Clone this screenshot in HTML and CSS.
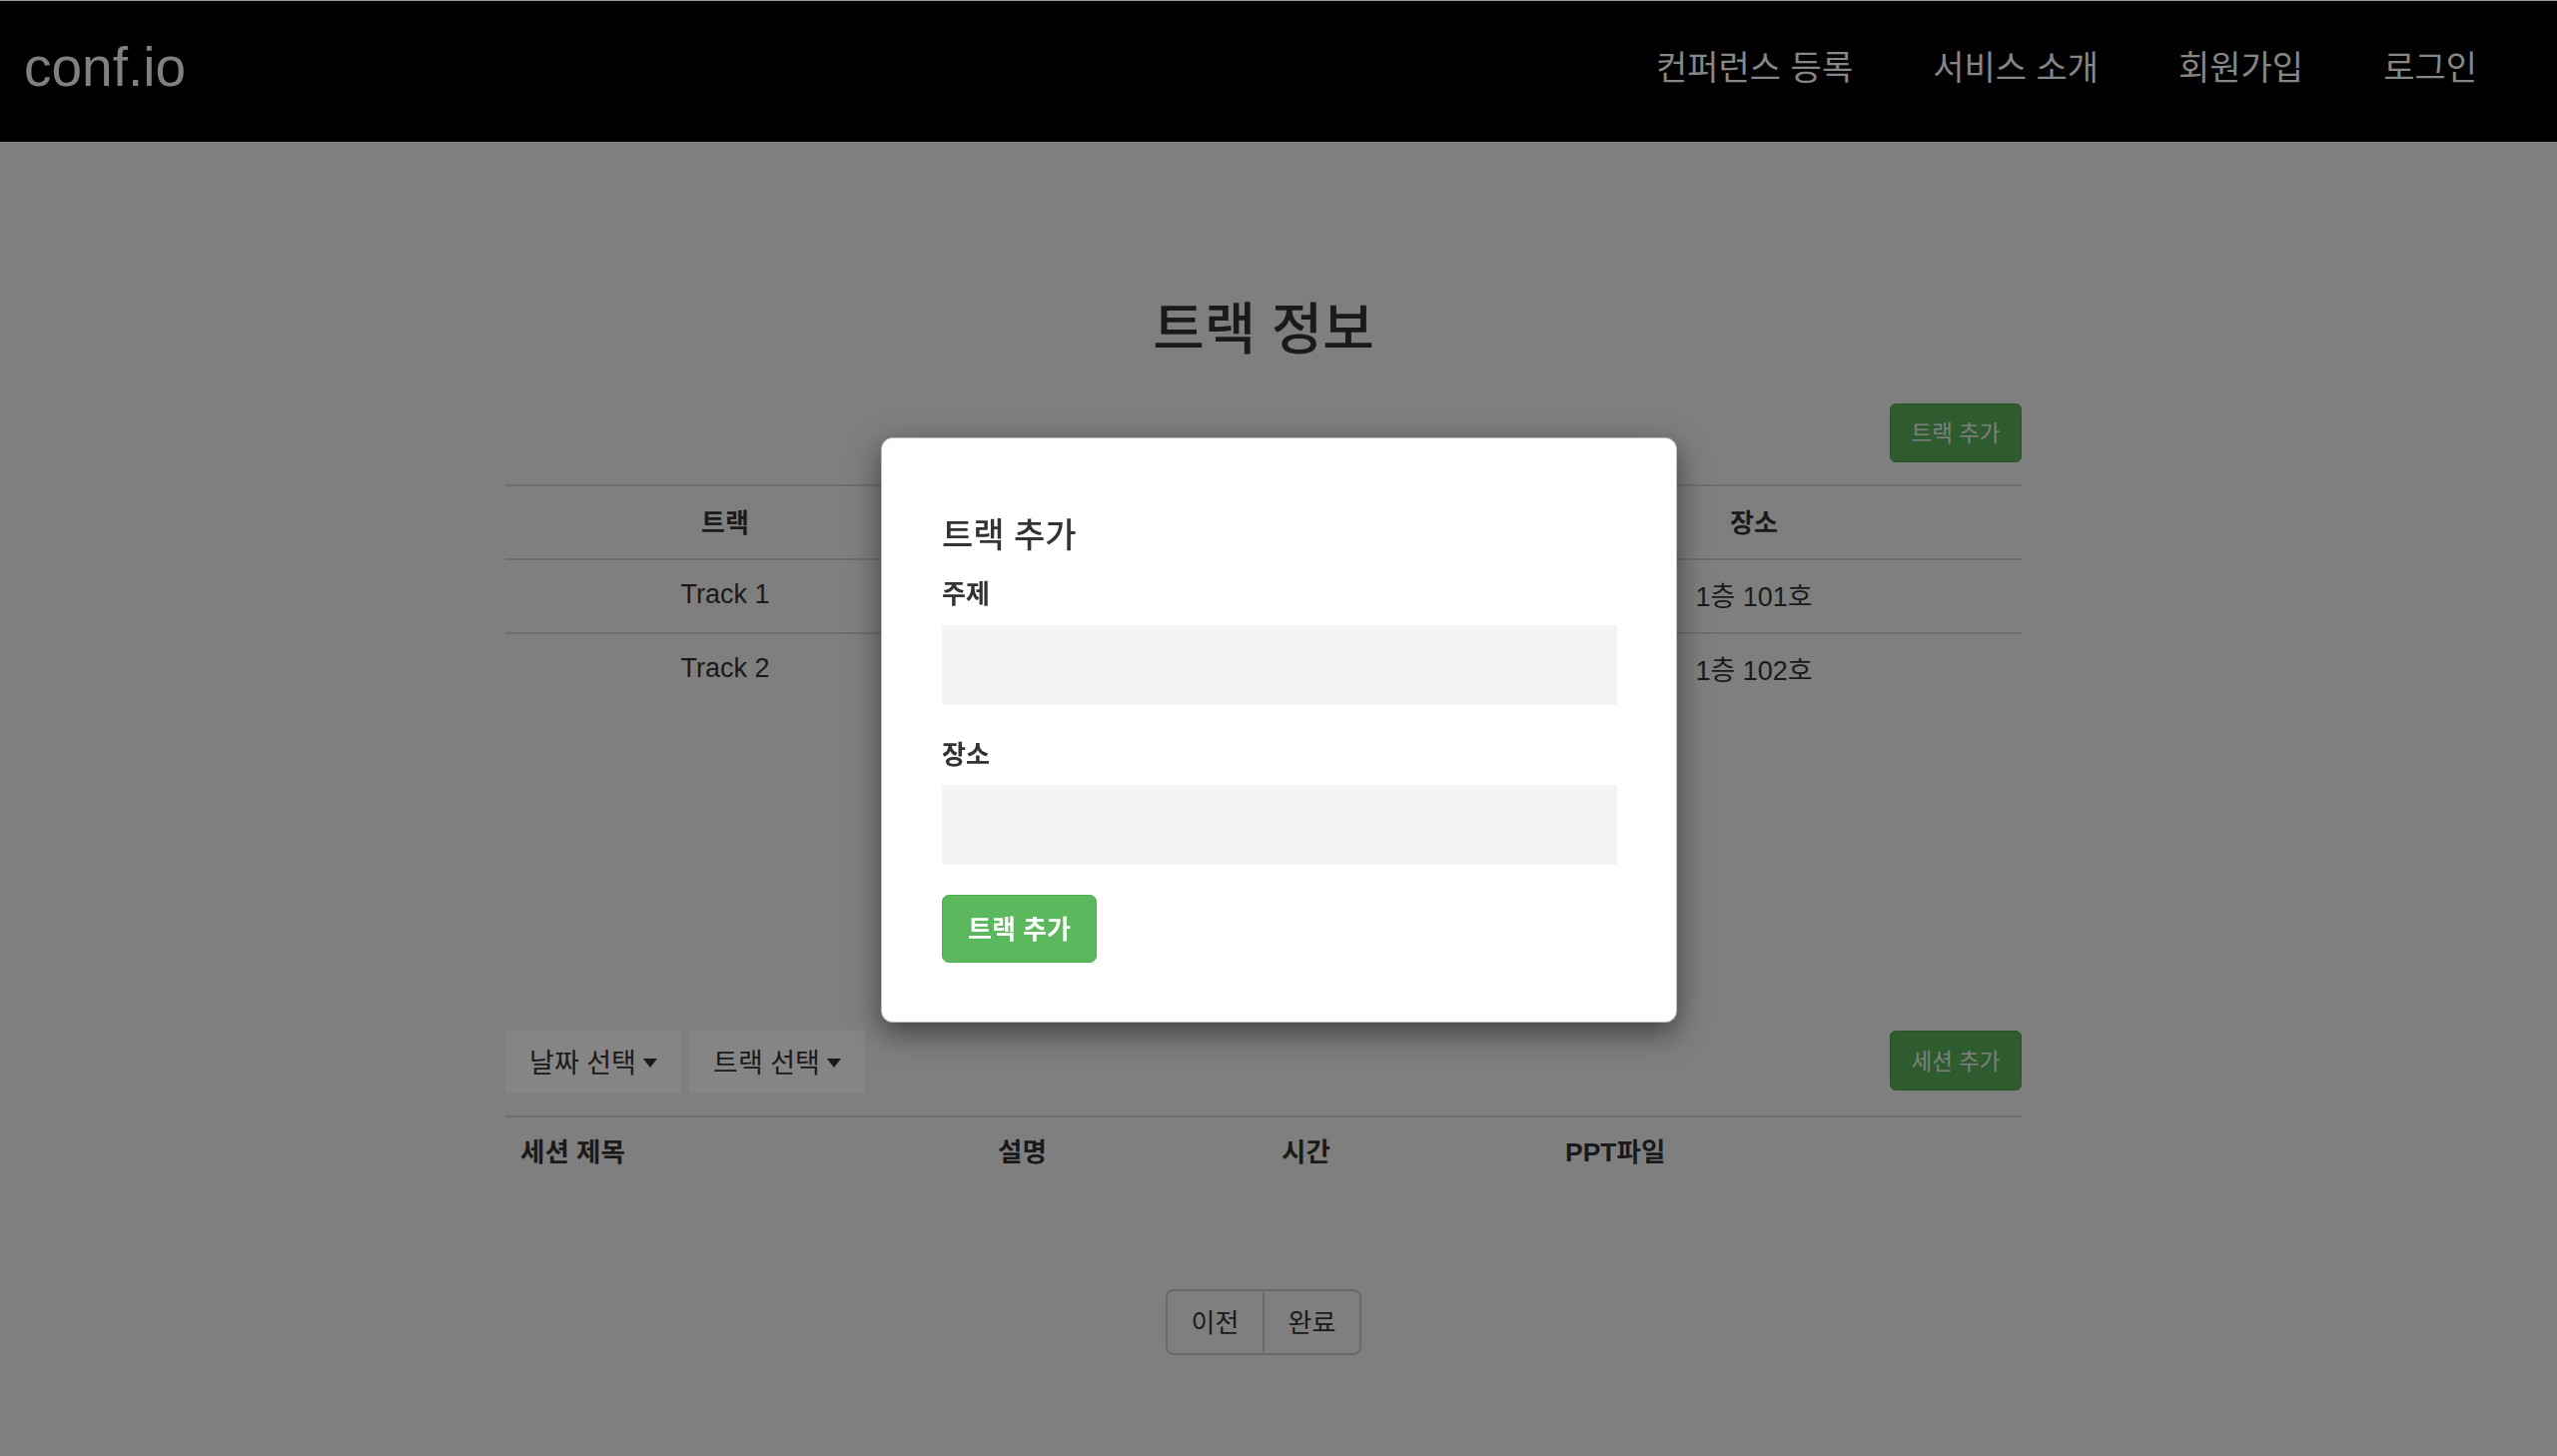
FILE: index.html
```html
<!DOCTYPE html>
<html lang="ko">
<head>
<meta charset="utf-8">
<title>conf.io</title>
<link rel="stylesheet" href="styles.css">
</head>
<body>
<header class="navbar">
  <a class="brand">conf.io</a>
  <nav class="nav">
    <a class="nav-link">컨퍼런스 등록</a>
    <a class="nav-link">서비스 소개</a>
    <a class="nav-link">회원가입</a>
    <a class="nav-link">로그인</a>
  </nav>
</header>

<div class="page">
  <main class="container">
    <h1 class="page-title">트랙 정보</h1>

    <div class="toolbar toolbar-end">
      <button class="btn btn-success-dim">트랙 추가</button>
    </div>

    <div class="track-table">
      <div class="row head">
        <div class="cell">트랙</div>
        <div class="cell"></div>
        <div class="cell">장소</div>
      </div>
      <div class="row">
        <div class="cell">Track 1</div>
        <div class="cell"></div>
        <div class="cell">1층 101호</div>
      </div>
      <div class="row">
        <div class="cell">Track 2</div>
        <div class="cell"></div>
        <div class="cell">1층 102호</div>
      </div>
    </div>

    <div class="toolbar toolbar-between session-toolbar">
      <div class="dropdowns">
        <button class="btn btn-drop">날짜 선택<span class="caret"></span></button>
        <button class="btn btn-drop">트랙 선택<span class="caret"></span></button>
      </div>
      <button class="btn btn-success-dim btn-session">세션 추가</button>
    </div>

    <div class="session-table">
      <div class="srow">
        <div class="scell">세션 제목</div>
        <div class="scell">설명</div>
        <div class="scell">시간</div>
        <div class="scell">PPT파일</div>
      </div>
    </div>

    <div class="pager">
      <button class="pager-btn">이전</button>
      <button class="pager-btn">완료</button>
    </div>
  </main>
</div>

<div class="modal">
  <h4 class="modal-title">트랙 추가</h4>
  <label class="field-label">주제</label>
  <div class="field-input"></div>
  <label class="field-label field-label-2">장소</label>
  <div class="field-input field-input-2"></div>
  <button class="btn btn-success">트랙 추가</button>
</div>
</body>
</html>
```

FILE: styles.css
```css
* { box-sizing: border-box; }

html, body {
  margin: 0;
  padding: 0;
}

body {
  background: #7f7f7f;
  font-family: "Liberation Sans", "Noto Sans CJK KR", sans-serif;
  color: #1a1a1a;
  height: 1458px;
  overflow: hidden;
}

button {
  font-family: inherit;
  cursor: pointer;
}

/* ---------- navbar ---------- */
.navbar {
  height: 142px;
  background: #000;
  border-top: 1px solid #9a9a9a;
  display: flex;
  align-items: center;
  justify-content: space-between;
  padding: 0 40px 8px 24px;
}

.brand {
  font-size: 55px;
  line-height: 60px;
  color: #808080;
  margin-bottom: 2px;
}

.nav {
  display: flex;
  gap: 80px;
}

.nav-link {
  font-size: 34px;
  line-height: 40px;
  color: #868686;
}

.nav-link:last-child {
  margin-right: 40px;
}

/* ---------- page ---------- */
.page {
  padding-right: 30px;
}

.container {
  width: 1518px;
  margin: 0 auto;
}

.page-title {
  margin: 157px 0 0;
  text-align: center;
  font-size: 56px;
  line-height: 62px;
  font-weight: 500;
  color: #1a1a1a;
}

.toolbar {
  display: flex;
  align-items: center;
}

.toolbar-end {
  justify-content: flex-end;
  margin-top: 43px;
}

.toolbar-between {
  justify-content: space-between;
}

.btn {
  border: 0;
  margin: 0;
  display: inline-flex;
  align-items: center;
  justify-content: center;
}

.btn-success-dim {
  width: 132px;
  height: 59px;
  background: #2e5c2e;
  border: 1px solid #275627;
  border-radius: 6px;
  color: #7f7f7f;
  font-size: 22.5px;
  padding: 0 0 3px;
}

/* ---------- track table ---------- */
.track-table {
  margin-top: 22px;
}

.row {
  display: grid;
  grid-template-columns: 440px 1fr 536px;
  height: 74px;
  border-top: 2px solid #6e6e6e;
}

.cell {
  display: flex;
  align-items: center;
  justify-content: center;
  padding-bottom: 3px;
  font-size: 27px;
  color: #1a1a1a;
}

.row.head .cell {
  font-size: 26px;
  font-weight: 700;
}

/* ---------- sessions ---------- */
.session-toolbar {
  margin-top: 325px;
  height: 63px;
}

.dropdowns {
  display: flex;
  gap: 8px;
}

.btn-drop {
  height: 63px;
  width: 176px;
  background: #858585;
  border-radius: 3px;
  font-size: 27px;
  color: #1a1a1a;
  padding: 0 0 2px;
}

.caret {
  display: inline-block;
  width: 0;
  height: 0;
  margin-left: 7px;
  margin-top: 4px;
  border-top: 9px solid #1a1a1a;
  border-left: 7px solid transparent;
  border-right: 7px solid transparent;
}

.btn-session {
  height: 60px;
  align-self: flex-start;
}

.session-table {
  margin-top: 22px;
}

.srow {
  display: grid;
  grid-template-columns: 478px 284px 284px 1fr;
  height: 72px;
  border-top: 2px solid #6e6e6e;
}

.scell {
  display: flex;
  align-items: center;
  padding: 0 0 5px 15px;
  font-size: 26.5px;
  font-weight: 700;
  color: #1a1a1a;
}

/* ---------- pager ---------- */
.pager {
  margin: 102px auto 0;
  display: flex;
  width: 196px;
  height: 66px;
  border: 2px solid #6a6a6a;
  border-radius: 8px;
  overflow: hidden;
}

.pager-btn {
  flex: 1;
  background: transparent;
  border: 0;
  font-size: 26px;
  color: #1a1a1a;
  padding: 0 0 3px;
}

.pager-btn + .pager-btn {
  border-left: 2px solid #6a6a6a;
}

/* ---------- modal (overlays the page) ---------- */
.modal {
  position: fixed;
  top: 438px;
  left: 50%;
  width: 797px;
  margin-left: -398px;
  background: #fff;
  border-radius: 12px;
  border: 1px solid rgba(0, 0, 0, 0.25);
  box-shadow: 0 10px 30px rgba(0, 0, 0, 0.5);
  padding: 77px 60px 59px;
  display: flex;
  flex-direction: column;
  align-items: flex-start;
}

.modal-title {
  margin: 0;
  font-size: 34px;
  line-height: 40px;
  font-weight: 500;
  color: #333;
}

.field-label {
  display: block;
  margin-top: 24px;
  font-size: 26px;
  line-height: 30px;
  font-weight: 700;
  color: #333;
}

.field-label-2 {
  margin-top: 35px;
}

.field-input {
  margin-top: 16px;
  width: 676px;
  height: 80px;
  background: #f4f4f4;
}

.field-input-2 {
  margin-top: 15px;
}

.btn-success {
  margin-top: 30px;
  width: 155px;
  height: 68px;
  background: #5cb85c;
  border: 1px solid #4cae4c;
  border-radius: 7px;
  color: #fff;
  font-size: 26px;
  font-weight: 700;
  padding: 0 0 3px;
}
```
